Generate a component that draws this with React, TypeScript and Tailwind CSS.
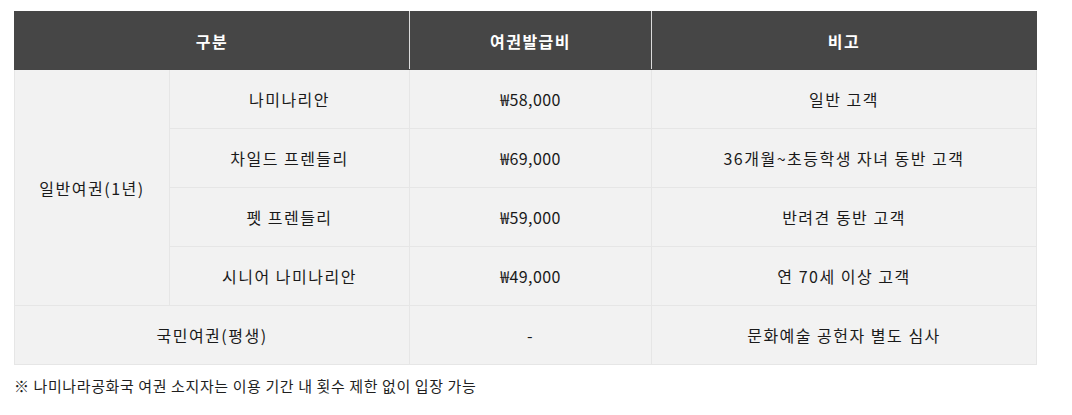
const rows = [
  { type: '나미나리안', price: '₩58,000', note: '일반 고객' },
  { type: '차일드 프렌들리', price: '₩69,000', note: '36개월~초등학생 자녀 동반 고객' },
  { type: '펫 프렌들리', price: '₩59,000', note: '반려견 동반 고객' },
  { type: '시니어 나미나리안', price: '₩49,000', note: '연 70세 이상 고객' },
];

const td = 'border border-[#e6e6e6] text-center align-middle';

export default function App() {
  return (
    <div
      className="min-h-screen bg-white pl-[14px] pt-[11px] text-[16px] tracking-[1.5px] text-[#1a1a1a]"
      style={{ fontFamily: '"Noto Sans CJK KR", "Noto Sans", sans-serif' }}
    >
      <table className="w-[1023px] table-fixed border-collapse bg-[#f2f2f2]">
        <colgroup>
          <col className="w-[155px]" />
          <col className="w-[240px]" />
          <col className="w-[242px]" />
          <col />
        </colgroup>
        <thead>
          <tr className="h-[58px] bg-[#464646] text-white">
            <th colSpan={2} className="border border-[#464646] border-r-[#dcdcdc] font-bold">
              구분
            </th>
            <th className="border border-[#464646] border-r-[#dcdcdc] font-bold">여권발급비</th>
            <th className="border border-[#464646] font-bold">비고</th>
          </tr>
        </thead>
        <tbody>
          {rows.map((r, i) => (
            <tr key={r.type} className="h-[59px]">
              {i === 0 && (
                <td rowSpan={4} className={td}>
                  일반여권(1년)
                </td>
              )}
              <td className={td}>{r.type}</td>
              <td className={`${td} tracking-[0.4px]`}>{r.price}</td>
              <td className={td}>{r.note}</td>
            </tr>
          ))}
          <tr className="h-[59px]">
            <td colSpan={2} className={td}>
              국민여권(평생)
            </td>
            <td className={td}>-</td>
            <td className={td}>문화예술 공헌자 별도 심사</td>
          </tr>
        </tbody>
      </table>
      <p className="mt-[10px] text-[15px] tracking-[0.6px] text-[#1f1f1f]">
        ※ 나미나라공화국 여권 소지자는 이용 기간 내 횟수 제한 없이 입장 가능
      </p>
    </div>
  );
}
